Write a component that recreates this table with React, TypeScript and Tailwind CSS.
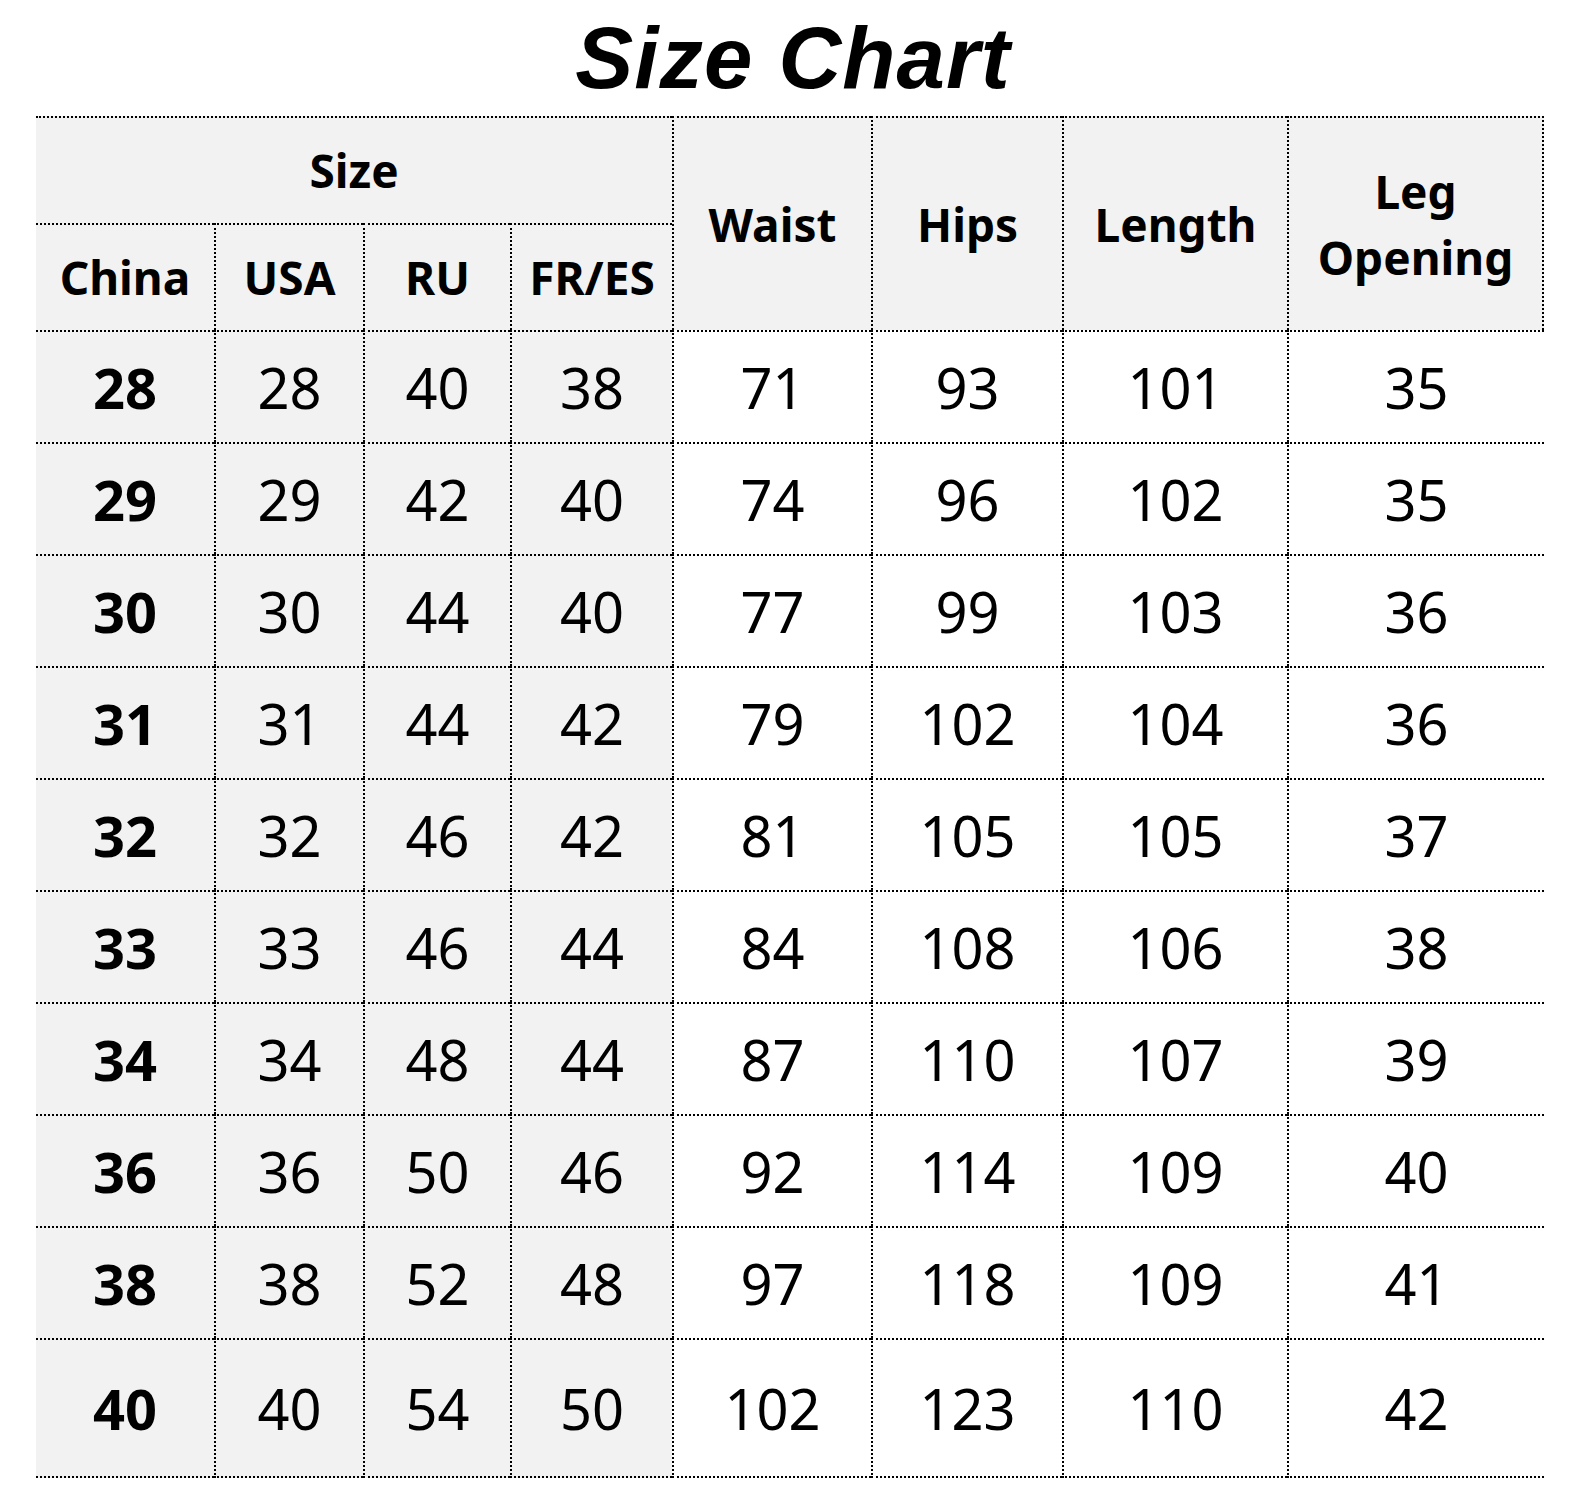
const rows: [string, string, string, string, string, string, string, string][] = [
  ["28", "28", "40", "38", "71", "93", "101", "35"],
  ["29", "29", "42", "40", "74", "96", "102", "35"],
  ["30", "30", "44", "40", "77", "99", "103", "36"],
  ["31", "31", "44", "42", "79", "102", "104", "36"],
  ["32", "32", "46", "42", "81", "105", "105", "37"],
  ["33", "33", "46", "44", "84", "108", "106", "38"],
  ["34", "34", "48", "44", "87", "110", "107", "39"],
  ["36", "36", "50", "46", "92", "114", "109", "40"],
  ["38", "38", "52", "48", "97", "118", "109", "41"],
  ["40", "40", "54", "50", "102", "123", "110", "42"],
]

const line = "border-black border-dotted"

export default function App() {
  return (
    <div className="min-h-[1491px] w-[1586px] bg-white text-black font-['Noto_Sans',sans-serif]">
      <div className="h-[116px] pt-[14px] text-center">
        <h1 className="text-[87px] leading-none font-bold italic tracking-[1px] font-['Liberation_Sans',Arial,sans-serif]">
          Size Chart
        </h1>
      </div>

      <div className="ml-[36px] grid w-[1508px] grid-cols-[178px_149px_147px_162px_199px_191px_225px_257px] grid-rows-[107px_107px]">
        {/* header */}
        <div className={`col-span-4 flex items-center justify-center bg-[#f2f2f2] border-t-2 ${line} text-[46px] font-bold`}>
          Size
        </div>
        {["Waist", "Hips", "Length"].map((h) => (
          <div
            key={h}
            className={`row-span-2 flex items-center justify-center bg-[#f2f2f2] border-t-2 border-l-2 ${line} text-[46px] font-bold`}
          >
            {h}
          </div>
        ))}
        <div className={`row-span-2 flex flex-col items-center justify-center bg-[#f2f2f2] border-t-2 border-l-2 border-r-2 ${line} text-[46px] font-bold leading-[66px]`}>
          <span>Leg</span>
          <span>Opening</span>
        </div>
        {["China", "USA", "RU", "FR/ES"].map((h, i) => (
          <div
            key={h}
            className={`flex items-center justify-center bg-[#f2f2f2] border-t-2 ${i > 0 ? "border-l-2" : ""} ${line} text-[46px] font-bold`}
          >
            {h}
          </div>
        ))}

        {/* body */}
        {rows.map((r, ri) => {
          const last = ri === rows.length - 1
          return r.map((v, ci) => (
            <div
              key={`${ri}-${ci}`}
              className={`flex items-center justify-center border-t-2 ${ci > 0 ? "border-l-2" : ""} ${last ? "h-[140px] border-b-2" : "h-[112px]"} ${line} ${ci < 4 ? "bg-[#f2f2f2]" : "bg-white"} ${ci === 0 ? "font-bold" : ""} text-[56px]`}
            >
              {v}
            </div>
          ))
        })}
      </div>
    </div>
  )
}
